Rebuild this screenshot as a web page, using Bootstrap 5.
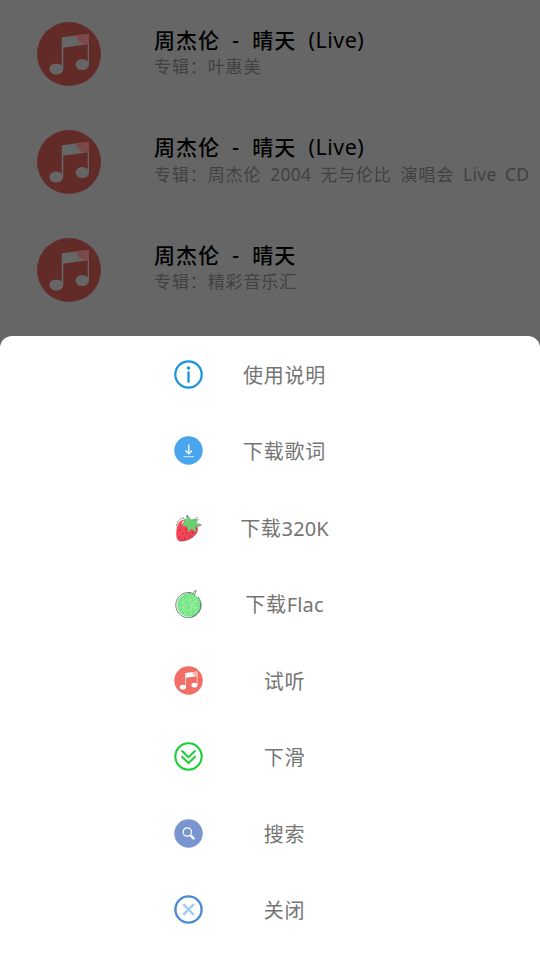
<!DOCTYPE html>
<html lang="zh-CN">
<head>
<meta charset="utf-8">
<meta name="viewport" content="width=device-width, initial-scale=1">
<title>音乐下载</title>
<link href="https://cdn.jsdelivr.net/npm/bootstrap@5.3.0/dist/css/bootstrap.min.css" rel="stylesheet">
<style>
body{font-family:"Noto Sans","Noto Sans CJK SC",sans-serif;background:#666;height:960px;overflow:hidden}
.songs{height:336px}
.song{height:108px;padding-left:37px;white-space:nowrap}
.cover{width:64px;height:64px;flex:none;margin-right:53px}
.song-text{padding-bottom:3px}
.song-title{font-size:21px;line-height:27px;color:#000;letter-spacing:1.100px;word-spacing:5.500px;font-weight:500}
.song-title .latin{font-size:21.500px;letter-spacing:.5px;font-weight:400}
.song-album{font-size:17px;line-height:26px;color:#414141;letter-spacing:.880px;word-spacing:3.600px}
.song-album .latin{font-size:17.500px;letter-spacing:.25px}
.sheet{height:624px;border-radius:12px 12px 0 0}
.action{height:76.5px;padding-left:174px;color:#757575;font-size:20px}
.action svg{width:29px;height:29px;flex:none;display:block}
.action-label{width:163px;padding-top:3px;text-align:center;letter-spacing:.7px;line-height:30px}
.action-label .latin{letter-spacing:.15px}
</style>
<script src="https://cdn.jsdelivr.net/npm/bootstrap@5.3.0/dist/js/bootstrap.bundle.min.js"></script>
</head>
<body>
<svg width="0" height="0" class="position-absolute" aria-hidden="true">
<symbol id="note" viewBox="0 0 64 64">
<path d="M24.800 15.200 52 11.700V42.500H50.700V22.300L26.300 25.700V47H24.800z"/>
<ellipse cx="19.300" cy="47" rx="6.900" ry="5.500"/><ellipse cx="45.300" cy="42.500" rx="6.700" ry="5.500"/>
</symbol>
</svg>
<main class="songs">
<div class="song d-flex align-items-center">
<svg class="cover" viewBox="0 0 64 64"><circle cx="32" cy="32" r="32" fill="#622b28"/><use href="#note" fill="#666"/><path d="M39.500 13.300 52 11.700V22.300C44 23 40 19 39.500 13.300z" fill="#7a4a48"/></svg>
<div class="song-text"><div class="song-title">周杰伦 - 晴天 <span class="latin">(Live)</span></div><div class="song-album">专辑：叶惠美</div></div>
</div>
<div class="song d-flex align-items-center">
<svg class="cover" viewBox="0 0 64 64"><circle cx="32" cy="32" r="32" fill="#622b28"/><use href="#note" fill="#666"/><path d="M39.500 13.300 52 11.700V22.300C44 23 40 19 39.500 13.300z" fill="#7a4a48"/></svg>
<div class="song-text"><div class="song-title">周杰伦 - 晴天 <span class="latin">(Live)</span></div><div class="song-album">专辑：周杰伦 <span class="latin">2004</span> 无与伦比 演唱会 <span class="latin">Live CD</span></div></div>
</div>
<div class="song d-flex align-items-center">
<svg class="cover" viewBox="0 0 64 64"><circle cx="32" cy="32" r="32" fill="#622b28"/><use href="#note" fill="#666"/><path d="M39.500 13.300 52 11.700V22.300C44 23 40 19 39.500 13.300z" fill="#7a4a48"/></svg>
<div class="song-text"><div class="song-title">周杰伦 - 晴天</div><div class="song-album">专辑：精彩音乐汇</div></div>
</div>
</main>
<section class="sheet bg-white">
<div class="action d-flex align-items-center">
<svg viewBox="0 0 29 29"><circle cx="14.500" cy="14.500" r="13.200" fill="none" stroke="#1794dc" stroke-width="2.200"/><circle cx="14.500" cy="8" r="1.700" fill="#1794dc"/><path d="M14.500 12.500v9.300" stroke="#1794dc" stroke-width="2.300" stroke-linecap="round"/></svg>
<div class="action-label">使用说明</div></div>
<div class="action d-flex align-items-center">
<svg viewBox="0 0 29 29"><circle cx="14.500" cy="14.500" r="14.200" fill="#49a5ee"/><path d="M14.800 8.500v9M11.500 14.500l3.300 3.300 3.300-3.300" fill="none" stroke="#fff" stroke-width="1.300"/><path d="M9.500 20.700h10.500" stroke="#d5eafb" stroke-width="1"/></svg>
<div class="action-label">下载歌词</div></div>
<div class="action d-flex align-items-center">
<svg viewBox="0 0 29 29"><path d="M10 4.500C5 6 3 9 2.500 13" fill="none" stroke="#777" stroke-width=".8"/><path d="M10.500 6.500C5 7 2.500 13 2.300 19c-.1 5 .2 8 2.700 8.800 5 1.300 14-2.300 17-7.300 2-3.500 1.500-6 .5-8z" fill="#f44455"/><path d="M5 27.800c6 .8 14-2.500 17-7.300 1.500-2.500 1.500-4.500 1.200-6" fill="none" stroke="#9b343d" stroke-width=".8"/><path d="M13 2l3.200 4.200L23 6l-.5 3.500 4.500 2.500-5.500 1.500.5 5.500-4.500-3-3 3-1.500-5.500L8.200 13l2.500-4.500-1.500-3 4 .7z" fill="#69ce72"/><path d="M12.500 5.500 13 2l3 3.800M20.300 7.500c.8-2 1.800-3 3.200-2.900M22.500 9c.5-1.700 1-3 2.500-2.900M24 11.500l3.300.5-4.500 2" fill="none" stroke="#777" stroke-width=".8"/><path d="M9.500 7.800 8 11" stroke="#fff" stroke-width="1.200"/><path d="M6 16.500v1M9 20v1M13 19.500v1M6 23.500v1M10.500 24.500v1M16 22.500v1M12 15.500v1M18.500 19v1" stroke="#702c35" stroke-width="1.200"/></svg>
<div class="action-label"><span>下载</span><span class="latin">320K</span></div></div>
<div class="action d-flex align-items-center">
<svg viewBox="0 0 29 29"><circle cx="15" cy="16" r="11.800" fill="#78e68b"/><path d="M17 3.800A12.600 12.600 0 1 0 24 8M15 4.500c2-1.500 3.500-.3 4 .7 0-2 1.200-3.600 3-3.700l-.8 3c-.8.300-1.200 1-1.200 2" fill="none" stroke="#68736a" stroke-width=".9"/><path d="M5 12l4 2 3-4 4 2 4-4M5 18l5 1 3-4 5 2 2-5 5 1M7 23l4-3 5 2 3-4 6 1M9 9l1 5-1 5 2 7M15 6l1 6 2 5-2 5 2 4M22 10l-2 8 3 5" fill="none" stroke="#a2f0a0" stroke-width=".8"/><path d="M26.800 14C27.800 20 24 26 18 27.500" fill="none" stroke="#59866a" stroke-width="1"/></svg>
<div class="action-label"><span>下载</span><span class="latin">Flac</span></div></div>
<div class="action d-flex align-items-center">
<svg viewBox="0 0 29 29"><circle cx="14.500" cy="14.500" r="14.200" fill="#f26d65"/><use href="#note" width="28.400" height="28.400" x=".3" y=".3" fill="#fff"/><path d="M18.500 6.200 23.200 5.700v4.500C20 10.300 18.700 8.600 18.500 6.200z" fill="#f9b3ae"/></svg>
<div class="action-label">试听</div></div>
<div class="action d-flex align-items-center">
<svg viewBox="0 0 29 29"><circle cx="14.500" cy="14.500" r="13.200" fill="none" stroke="#19cf36" stroke-width="2.100"/><path d="M7.500 8.500l7 6.700 7-6.700M7.500 14.300l7 6.700 7-6.700" fill="none" stroke="#19cf36" stroke-width="2"/></svg>
<div class="action-label">下滑</div></div>
<div class="action d-flex align-items-center">
<svg viewBox="0 0 29 29"><circle cx="14.500" cy="14.500" r="14.200" fill="#7895cf"/><circle cx="13.300" cy="13" r="4.200" fill="none" stroke="#fff" stroke-width="1.200"/><path d="M16.300 16l1.500 1.500" stroke="#fff" stroke-width="1.200"/><path d="M17.500 17.300l2.200 2.200" stroke="#fff" stroke-width="2.400" stroke-linecap="round"/></svg>
<div class="action-label">搜索</div></div>
<div class="action d-flex align-items-center">
<svg viewBox="0 0 29 29"><circle cx="14.500" cy="14.500" r="13.100" fill="none" stroke="#4b8bd4" stroke-width="2.400"/><path d="M9.200 9.200l10.600 10.600M19.800 9.200 9.200 19.800" stroke="#a5cdf4" stroke-width="2.500"/></svg>
<div class="action-label">关闭</div></div>
</section>
</body>
</html>
